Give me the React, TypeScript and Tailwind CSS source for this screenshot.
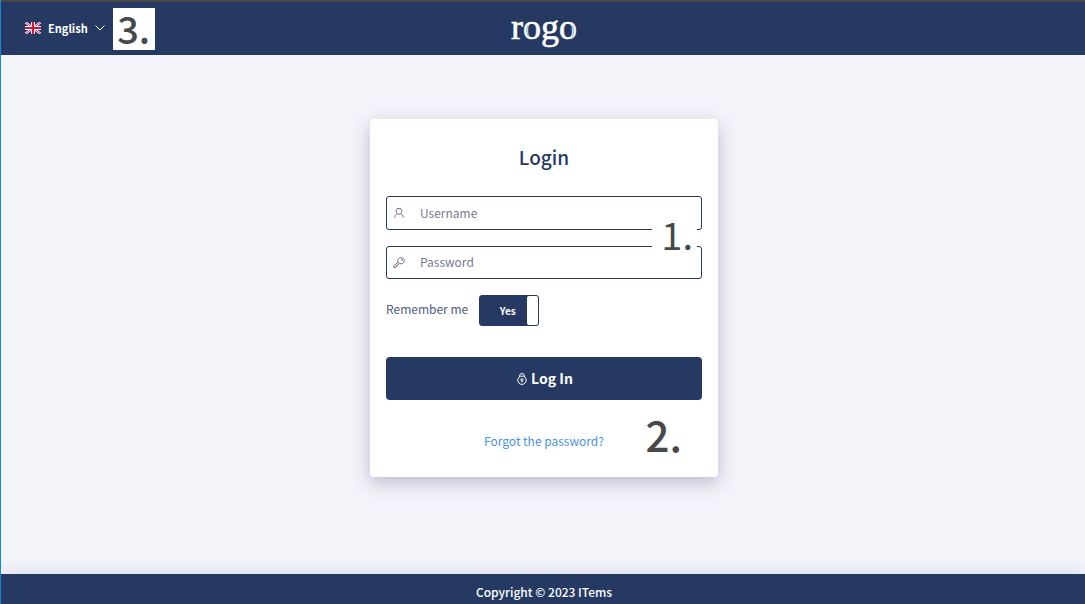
import { useState } from "react";
import type { SVGProps } from "react";
import { clsx } from "clsx";

type IconProps = SVGProps<SVGSVGElement>;

function FlagIcon(props: IconProps) {
  return (
    <svg viewBox="0 0 16 12" aria-hidden="true" {...props}>
      <path fill="#1f2f74" d="M0 0h16v12H0z" />
      <path stroke="#fff" strokeWidth="2.4" d="M0 0l16 12M16 0L0 12" />
      <path stroke="#d0183a" strokeWidth="0.9" d="M0 0l16 12M16 0L0 12" />
      <path stroke="#fff" strokeWidth="4" d="M8 0v12M0 6h16" />
      <path stroke="#d0183a" strokeWidth="2.2" d="M8 0v12M0 6h16" />
    </svg>
  );
}

function ChevronIcon(props: IconProps) {
  return (
    <svg viewBox="0 0 10 6" fill="none" stroke="currentColor" aria-hidden="true" {...props}>
      <path d="M0.5 0.5L5 5l4.5-4.5" />
    </svg>
  );
}

function UserIcon(props: IconProps) {
  return (
    <svg viewBox="0 0 10 10" fill="none" stroke="currentColor" strokeWidth="0.9" aria-hidden="true" {...props}>
      <path d="M3 0.600h4c0.500 0.800 0.800 1.600 0.800 2.600 0 1.700-1.200 3-2.800 3S2.200 4.900 2.200 3.200c0-1 0.300-1.800 0.800-2.600z" />
      <path d="M3.500 5.700C1.900 6.500 0.900 7.700 0.600 9.600M6.500 5.700c1.600 0.800 2.600 2 2.900 3.900" />
    </svg>
  );
}

function KeyIcon(props: IconProps) {
  return (
    <svg viewBox="0 0 12 11" fill="none" stroke="currentColor" strokeWidth="0.9" aria-hidden="true" {...props}>
      <path d="M5 5.300L0.800 8.900v1.500h2l0.300-1.300 1.300-0.200 0.200-1.200 1.500-0.800" />
      <path d="M7.900 0.700c2 0 3.400 1.100 3.400 2.900S9.900 6.800 7.900 6.800 4.700 5.500 4.700 3.700 5.900 0.700 7.900 0.700z" />
      <circle cx="9" cy="2.900" r="0.5" />
    </svg>
  );
}

function LockIcon(props: IconProps) {
  return (
    <svg viewBox="0 0 10 12" fill="none" stroke="currentColor" aria-hidden="true" {...props}>
      <path d="M2.500 4V3.200C2.500 1.600 3.500 0.600 5 0.600s2.500 1 2.500 2.600V4" />
      <circle cx="5" cy="7.200" r="4.200" />
      <circle cx="5" cy="6.800" r="1.100" />
      <path d="M5 7.900v1.500" />
    </svg>
  );
}

function Logo() {
  return (
    <svg viewBox="0 0 68 48" className="h-12 w-[68px]" role="img" aria-label="rogo">
      <text x="1" y="34" fill="#fff" stroke="#fff" strokeWidth="0.6" fontSize="36" fontFamily="'Liberation Serif', serif">
        rogo
      </text>
      <g fill="none" stroke="#7fb2d0" strokeWidth="1">
        <path d="M18 20.500c-1.800 3-1.500 8 1 11" />
        <path d="M62.500 20.500c1.800 3 1.800 7.500 0 11" />
      </g>
    </svg>
  );
}

const fieldClass =
  "w-full rounded-[3px] border border-[#253963] bg-white pl-[33px] pr-3 pb-0.5 text-[12px] text-[#253963] outline-none placeholder:text-[#777b91]";

function LoginCard() {
  const [remember, setRemember] = useState(true);

  return (
    <form
      onSubmit={(e) => e.preventDefault()}
      className="relative w-full max-w-[348px] rounded-[4px] bg-white px-4 pt-6 pb-[26px] shadow-[0_6px_18px_rgba(60,55,110,0.3)]"
    >
      <h1 className="text-center text-[19px] leading-7 font-medium">Login</h1>

      <div className="relative mt-[25px]">
        <UserIcon className="absolute left-2 top-3 h-[10px] w-[10px] text-[#5c6078]" />
        <input type="text" aria-label="Username" placeholder="Username" className={clsx(fieldClass, "block h-[34px]")} />
      </div>

      <div className="relative mt-4">
        <KeyIcon className="absolute left-[7px] top-[11px] h-[11px] w-3 text-[#5c6078]" />
        <input type="password" aria-label="Password" placeholder="Password" className={clsx(fieldClass, "block h-[33px]")} />
      </div>

      {/* Remember me */}
      <label className="mt-4 flex w-fit cursor-pointer items-start gap-[11px] text-[12px] text-[#4d5c82]">
        <span className="leading-7">Remember me</span>
        <input
          type="checkbox"
          checked={remember}
          onChange={(e) => setRemember(e.target.checked)}
          className="sr-only"
        />
        <span
          className={clsx(
            "flex h-[31px] w-[60px] rounded-[3px] border border-[#253963] bg-[#253963]",
            !remember && "flex-row-reverse"
          )}
        >
          <span className="flex flex-1 items-center justify-center pl-2 text-[10px] font-bold text-white">
            {remember ? "Yes" : "No"}
          </span>
          <span className="w-[11px] rounded-[2px] bg-white" />
        </span>
      </label>

      <button
        type="submit"
        className="mt-[31px] flex h-[43px] w-full cursor-pointer items-center justify-center gap-1 rounded-[4px] bg-[#253963] pl-0.5 text-[14px] font-bold text-white"
      >
        <LockIcon className="h-3 w-[10px]" />
        Log In
      </button>

      <div className="mt-[31px] text-center text-[12px] leading-5">
        <a href="#forgot" className="text-[#4b92e0]">
          Forgot the password?
        </a>
      </div>

      {/* Step markers */}
      <span className="absolute right-[21px] top-24 flex h-[42px] w-[45px] items-center justify-end bg-white pr-1 pb-1 text-[38px] leading-none text-[#484848]">
        1.
      </span>
      <span className="absolute right-9 bottom-[21px] text-[42px] leading-[44px] font-medium text-[#484848]">2.</span>
    </form>
  );
}

export default function App() {
  return (
    <div className="flex min-h-screen flex-col border-l border-[#1686d9] bg-[#f3f4fa] font-['Noto_Sans_CJK_SC','Open_Sans',sans-serif] text-[#253963]">
      <header className="grid h-[55px] grid-cols-[1fr_auto_1fr] items-center border-t-2 border-[#484848] bg-[#253963] pl-6 pr-[22px] text-white">
        <div className="flex items-center">
          <label className="flex items-center pb-0.5">
            <FlagIcon className="mr-[7px] h-3 w-4" />
            <select
              aria-label="Language"
              className="field-sizing-content cursor-pointer appearance-none bg-transparent text-[11px] leading-5 font-bold outline-none"
            >
              <option>English</option>
            </select>
            <ChevronIcon className="ml-[7px] h-[6px] w-[10px]" />
          </label>
          <span className="ml-2 flex h-[42px] w-[42px] items-center justify-center bg-white pb-0.5 text-[38px] leading-none font-medium text-[#484848]">
            3.
          </span>
        </div>
        <Logo />
      </header>

      <main className="flex flex-1 items-start justify-center pt-16 pb-10 pl-0.5">
        <LoginCard />
      </main>

      <footer className="bg-[#253963] pt-2 pb-0.5 pl-0.5 text-center text-[12px] leading-5 font-medium text-white shadow-[0_0_16px_rgba(60,60,80,0.15)]">
        Copyright © 2023 ITems
      </footer>
    </div>
  );
}
